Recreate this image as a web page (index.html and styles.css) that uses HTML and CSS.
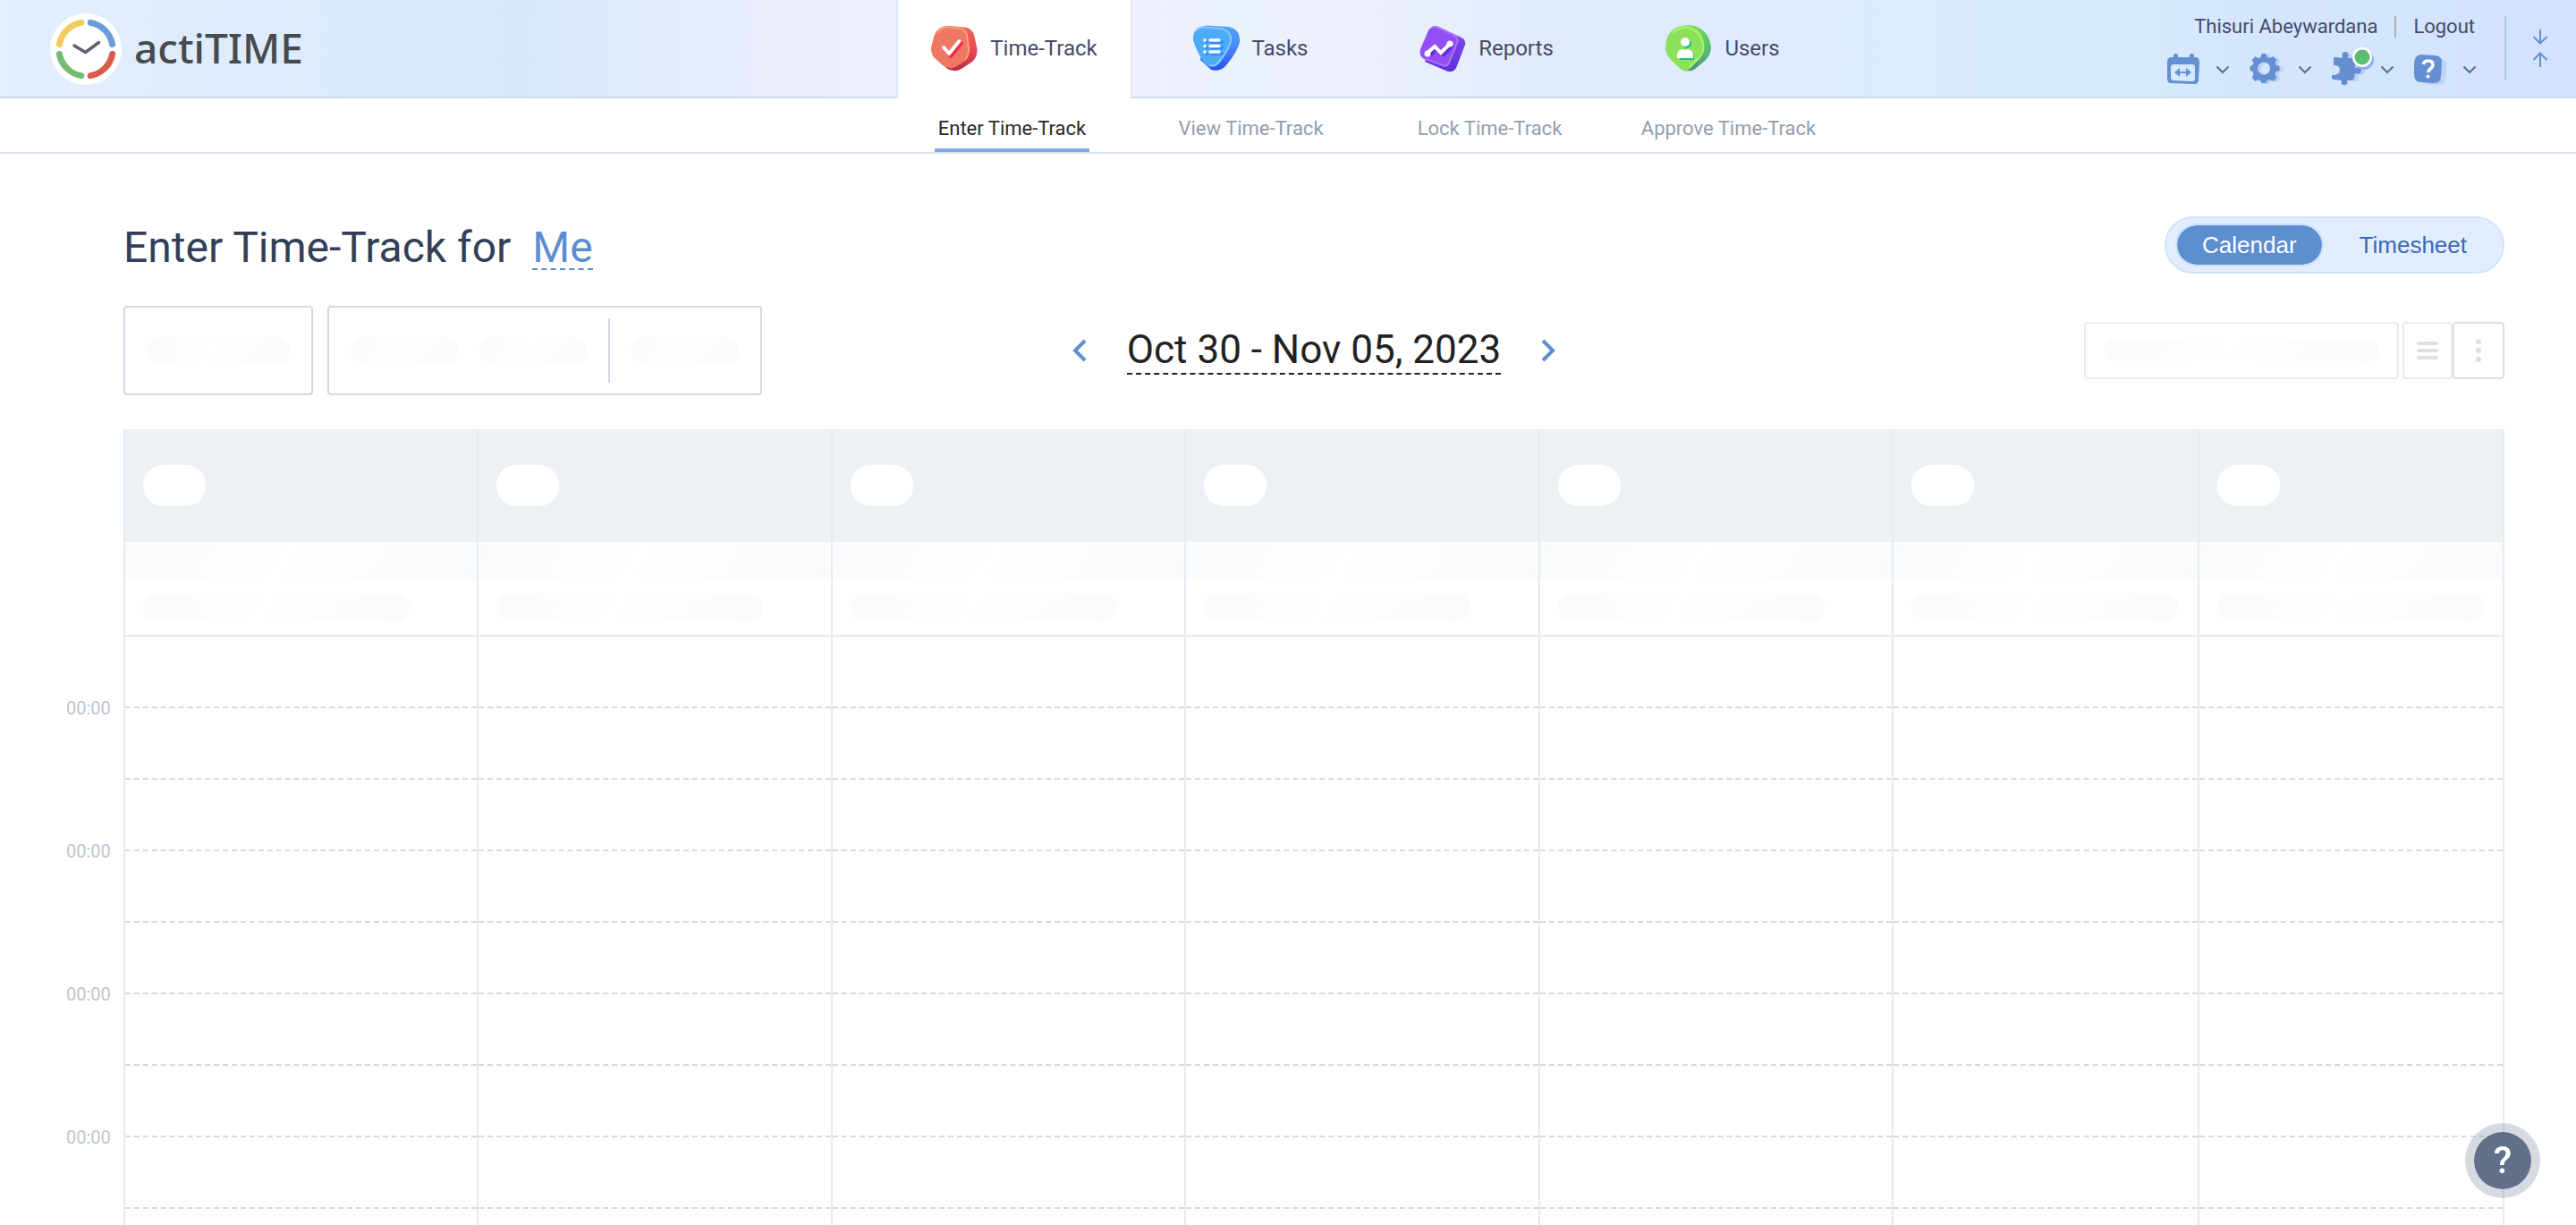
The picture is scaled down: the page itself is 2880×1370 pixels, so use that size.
FILE: index.html
```html
<!DOCTYPE html>
<html lang="en">
<head>
<meta charset="utf-8">
<title>actiTIME - Enter Time-Track</title>
<link rel="stylesheet" href="styles.css">
</head>
<body>
<div class="app">
  <header class="topbar">
    <a class="logo" href="#">
      <svg class="logo-mark" viewBox="0 0 80 80" aria-hidden="true">
        <circle cx="40" cy="40" r="40" fill="#fff"/>
        <g fill="none" stroke-width="7" stroke-linecap="round">
          <path d="M10.4 34.5A30 30 0 0 1 34.8 10.4" stroke="#f3cb5c"/>
          <path d="M45.2 10.4A30 30 0 0 1 69.6 34.5" stroke="#699dd8"/>
          <path d="M69.6 45.5A30 30 0 0 1 45.2 69.6" stroke="#d85c4c"/>
          <path d="M34.8 69.6A30 30 0 0 1 10.4 45.5" stroke="#76ba74"/>
        </g>
        <path d="M27 36l12.500 7.500L54.500 32.500" fill="none" stroke="#5f6073" stroke-width="3.500" stroke-linecap="round" stroke-linejoin="round"/>
      </svg>
      <span class="logo-text">actiTIME</span>
    </a>

    <nav class="tabs" aria-label="Main">
      <a class="tab tab-active" href="#">
        <svg class="tab-icon" viewBox="0 0 52 52" aria-hidden="true">
          <defs><linearGradient id="g-time" x1="0" y1="0" x2="0" y2="1"><stop offset="0" stop-color="#ee6a50"/><stop offset=".55" stop-color="#ee4459"/><stop offset="1" stop-color="#b92c44"/></linearGradient></defs>
          <path d="M18 1L38 2.500Q46 4 48 11L51.500 27Q52 36 46 41L34 49Q25 54 17 48L4 36Z" fill="url(#g-time)"/>
          <path d="M18 1L32 2.500Q39 4 41 11L43 26Q43 35 38 40L27 47Q20 50 13 45L4 37Q0 33 0 26L3 13Q7 1 18 1Z" fill="#ef7763"/>
          <path d="M7 9Q11 2 18 2.500L32 4Q38 5 40 11L42 26Q42 34 38 39" fill="none" stroke="#f5a07b" stroke-width="2"/>
          <path d="M16 28l6 7L34 20" fill="none" stroke="#f52755" stroke-width="4" stroke-linecap="round" stroke-linejoin="round"/>
          <path d="M14 25l6 7L31.500 18" fill="none" stroke="#fff" stroke-width="4" stroke-linecap="round" stroke-linejoin="round"/>
        </svg>
        <span>Time-Track</span>
      </a>
      <a class="tab" href="#">
        <svg class="tab-icon" viewBox="0 0 52 52" aria-hidden="true">
          <defs><linearGradient id="g-task" x1="0" y1="0" x2="0" y2="1"><stop offset="0" stop-color="#4ba8f8"/><stop offset=".5" stop-color="#4a86f6"/><stop offset="1" stop-color="#2452f2"/></linearGradient></defs>
          <path d="M14 0.500L40 2Q53 5 52 19Q50 29 37 45Q30 53 20 50L8 39Z" fill="url(#g-task)"/>
          <path d="M12 1L32 3Q44 5 43 18Q42 25 30 42Q20 51 12 42Q3 28 0 17Q-1 3 12 1Z" fill="#4dabf8"/>
          <path d="M3 7Q6 2 13 2.500L32 4Q43 7 42 18Q41 25 29 41Q24 47 18 45" fill="none" stroke="#83c6fb" stroke-width="2"/>
          <path d="M20 19h12M20 25.500h12M20 32h12M15 19h0M15 25.500h0M15 32h0" fill="none" stroke="#258afa" stroke-width="3.500" stroke-linecap="round"/>
          <path d="M19 17h10M19 23.500h10M19 30h10M13 17h0M13 23.500h0M13 30h0" fill="none" stroke="#fff" stroke-width="3.500" stroke-linecap="round"/>
        </svg>
        <span>Tasks</span>
      </a>
      <a class="tab" href="#">
        <svg class="tab-icon" viewBox="0 0 52 52" aria-hidden="true">
          <defs><linearGradient id="g-rep" x1="0" y1="0" x2="0" y2="1"><stop offset="0" stop-color="#8c4cf0"/><stop offset="1" stop-color="#5c2fdc"/></linearGradient></defs>
          <path d="M19 1.500L47 14Q52 17 51 22L41 48Q38 53 32 52L6 41Z" fill="url(#g-rep)"/>
          <path d="M21 2L38 10Q45 13 43 20L34 43Q31 48 26 46L5 38Q-1 34 1 27L10 6Q14 0 21 2Z" fill="#954df5"/>
          <path d="M14 3Q17 1 21 3L38 11Q44 14 42 20L33 42Q31 47 26 45L7 38" fill="none" stroke="#ab70f7" stroke-width="2"/>
          <path d="M12 34l7-8 8 7 10-10" fill="none" stroke="#5e2edd" stroke-width="4"/>
          <path d="M9 31l8-7 7 7 10-10" fill="none" stroke="#fff" stroke-width="4"/>
          <circle cx="9" cy="32" r="3.500" fill="#fff"/><circle cx="34" cy="21" r="3.500" fill="#fff"/>
        </svg>
        <span>Reports</span>
      </a>
      <a class="tab" href="#">
        <svg class="tab-icon" viewBox="0 0 52 52" aria-hidden="true">
          <defs><linearGradient id="g-user" x1="0" y1="0" x2="0" y2="1"><stop offset="0" stop-color="#77d254"/><stop offset=".6" stop-color="#52b878"/><stop offset="1" stop-color="#56907c"/></linearGradient></defs>
          <path d="M22 0.500H30Q49 5 51 25Q51 33 44 40L32 50Q29 52 22 51Z" fill="url(#g-user)"/>
          <path d="M22 0.500Q42 0 43.500 24Q43 34 36 40L26 50Q22 53 18 50L7 40Q0 33 0 25Q1 2 22 0.500Z" fill="#8de05a"/>
          <path d="M8 9Q21-3 34 7Q44 16 42 29Q40 35 35 39L27 47" fill="none" stroke="#a5f56c" stroke-width="2"/>
          <g fill="#22be84"><circle cx="24" cy="21" r="5"/><path d="M16 39v-4q1-6 6-6h4q6 1 6 6v4z"/></g>
          <g fill="#fff"><circle cx="22" cy="19" r="5"/><path d="M13 37v-4q1-6 6-6 3 2 6 0 5 1 6 6v4z"/></g>
        </svg>
        <span>Users</span>
      </a>
    </nav>

    <div class="account">
      <div class="account-main">
        <div class="account-links">
          <a href="#">Thisuri Abeywardana</a>
          <span class="account-sep"></span>
          <a href="#">Logout</a>
        </div>
        <div class="tools">
          <button class="tool" type="button" aria-label="Calendar settings">
            <svg class="tool-icon" viewBox="0 0 40 40" aria-hidden="true">
              <path d="M9 3q3-2 5 0v4H9zM27 3q3-2 5 0v4h-5z" fill="#6490d2"/>
              <path fill-rule="evenodd" d="M7 6h26q5 0 5 5l-1 20q0 5-5 5L6 35q-4 0-4-5L2 11q0-5 5-5zM9 14q-3 0-3 3v12q0 3 3 3l21 1q3 0 3-3V17q0-3-3-3z" fill="#6490d2"/>
              <path d="M10 23l6-5v4h7v-4l6 5-6 5v-4h-7v4z" fill="#6490d2"/>
            </svg>
            <svg class="tool-chevron" viewBox="0 0 16 10" aria-hidden="true"><path d="M1.500 1.500L8 8l6.500-6.500"/></svg>
          </button>
          <button class="tool" type="button" aria-label="Settings">
            <svg class="tool-icon" viewBox="0 0 40 40" aria-hidden="true">
              <defs><path id="gear" fill-rule="evenodd" d="M15.500 2h5l1 4 3 1 4-2 4 4-2 3 1 3 4 1v5l-4 1-1 3 2 4-4 4-4-2-3 1-1 3h-5l-1-3-3-1-3 2-4-4 2-4-1-3-3-1v-5l3-1 1-3-2-3 4-4 3 2 3-1zM18 11.500a7 7 0 1 0 0 14a7 7 0 1 0 0-14z"/></defs>
              <use href="#gear" x="4" y="1" fill="#bcd2f6"/>
              <use href="#gear" fill="#6490d2"/>
            </svg>
            <svg class="tool-chevron" viewBox="0 0 16 10" aria-hidden="true"><path d="M1.500 1.500L8 8l6.500-6.500"/></svg>
          </button>
          <button class="tool" type="button" aria-label="Add-ons">
            <svg class="tool-icon" viewBox="0 0 40 40" aria-hidden="true">
              <path d="M8 8q0-2 3-2l8-1q2-6 6 0l7 1v12q9-1 7 4t-7 4v6l-5 2z" fill="#bcd2f6"/>
              <path d="M4 8q0-3 3-2l7 1q-2-7 3-7t3 7h7q2 0 1 3v8q7-2 7 3t-7 3l-1 5q0 3-3 3h-5q2 5-3 5-5 0-3-5L5 31q-4 0-3-5 9 0 9-6 0-5-7-5z" fill="#6490d2"/>
              <circle cx="38" cy="9" r="11" fill="#8db2e8"/>
              <circle cx="36" cy="6" r="11" fill="#fff"/><circle cx="36" cy="6" r="8.500" fill="#5abf70"/>
            </svg>
            <svg class="tool-chevron" viewBox="0 0 16 10" aria-hidden="true"><path d="M1.500 1.500L8 8l6.500-6.500"/></svg>
          </button>
          <button class="tool" type="button" aria-label="Help">
            <svg class="tool-icon" viewBox="0 0 40 40" aria-hidden="true">
              <path d="M17 6l13 1q8 1 8 8l-1 15q-1 7-9 7l-12-1z" fill="#bcd2f6"/>
              <path d="M10 3l15 1q8 0 8 8l-1 15q0 8-8 8l-14-1q-8 0-8-9V12q1-9 8-9z" fill="#6490d2"/>
              <path d="M12.500 14q.500-4 5.500-4 5 0 5 4.500 0 2.500-3 4.500-2 1.500-2 4" fill="none" stroke="#fff" stroke-width="3.500"/>
              <circle cx="17.500" cy="27.500" r="2" fill="#fff"/>
            </svg>
            <svg class="tool-chevron" viewBox="0 0 16 10" aria-hidden="true"><path d="M1.500 1.500L8 8l6.500-6.500"/></svg>
          </button>
        </div>
      </div>
      <button class="collapse" type="button" aria-label="Collapse header">
        <svg viewBox="0 0 18 42" width="18" height="42" fill="none" stroke="#6490d2" stroke-width="2" aria-hidden="true"><path d="M9 0v15M1.500 8L9 15.500 16.500 8M9 42V27M1.500 34L9 26.500 16.500 34"/></svg>
      </button>
    </div>
  </header>

  <nav class="subnav" aria-label="Time-Track">
    <div class="subnav-item"><a class="subnav-link subnav-active" href="#">Enter Time-Track</a></div>
    <div class="subnav-item"><a class="subnav-link" href="#">View Time-Track</a></div>
    <div class="subnav-item"><a class="subnav-link" href="#">Lock Time-Track</a></div>
    <div class="subnav-item"><a class="subnav-link" href="#">Approve Time-Track</a></div>
  </nav>

  <main class="page">
    <div class="title-row">
      <h1 class="title">Enter Time-Track for <a class="title-user" href="#">Me</a></h1>
      <div class="switch">
        <button class="switch-option switch-on" type="button">Calendar</button>
        <button class="switch-option" type="button">Timesheet</button>
      </div>
    </div>

    <div class="controls">
      <div class="boxes">
        <div class="box"><span class="skeleton skeleton-wide"></span></div>
        <div class="box">
          <span class="skeleton"></span><span class="skeleton"></span>
          <span class="box-divider"></span>
          <span class="skeleton"></span>
        </div>
      </div>
      <div class="range">
        <button class="range-arrow" type="button" aria-label="Previous week"><svg width="16" height="26" viewBox="0 0 16 26" aria-hidden="true"><path d="M14 2L3 13l11 11"/></svg></button>
        <button class="range-label" type="button">Oct 30 - Nov 05, 2023</button>
        <button class="range-arrow" type="button" aria-label="Next week"><svg width="16" height="26" viewBox="0 0 16 26" aria-hidden="true"><path d="M2 2l11 11L2 24"/></svg></button>
      </div>
      <div class="view-tools">
        <div class="search-box"><span class="skeleton skeleton-search"></span></div>
        <button class="square" type="button" aria-label="List"><svg width="24" height="20" viewBox="0 0 24 20" aria-hidden="true"><path d="M2 2h20M2 10h20M2 18h20" stroke="#e0e0e0" stroke-width="4" stroke-linecap="round"/></svg></button>
        <button class="square square-more" type="button" aria-label="More"><svg width="6" height="26" viewBox="0 0 6 26" fill="#e0e0e0" aria-hidden="true"><circle cx="3" cy="3" r="3"/><circle cx="3" cy="13" r="3"/><circle cx="3" cy="23" r="3"/></svg></button>
      </div>
    </div>

    <div class="calendar">
      <div class="hours">
        <span class="hour">00:00</span><span class="hour">00:00</span><span class="hour">00:00</span><span class="hour">00:00</span>
      </div>
      <div class="days">
        <div class="day"><div class="day-head"><span class="day-pill"></span></div><div class="day-band"></div><div class="day-total"><span class="skeleton"></span></div><div class="slot"></div><div class="slot"></div><div class="slot"></div><div class="slot"></div><div class="slot"></div><div class="slot"></div><div class="slot"></div><div class="slot"></div><div class="slot"></div></div>
        <div class="day"><div class="day-head"><span class="day-pill"></span></div><div class="day-band"></div><div class="day-total"><span class="skeleton"></span></div><div class="slot"></div><div class="slot"></div><div class="slot"></div><div class="slot"></div><div class="slot"></div><div class="slot"></div><div class="slot"></div><div class="slot"></div><div class="slot"></div></div>
        <div class="day"><div class="day-head"><span class="day-pill"></span></div><div class="day-band"></div><div class="day-total"><span class="skeleton"></span></div><div class="slot"></div><div class="slot"></div><div class="slot"></div><div class="slot"></div><div class="slot"></div><div class="slot"></div><div class="slot"></div><div class="slot"></div><div class="slot"></div></div>
        <div class="day"><div class="day-head"><span class="day-pill"></span></div><div class="day-band"></div><div class="day-total"><span class="skeleton"></span></div><div class="slot"></div><div class="slot"></div><div class="slot"></div><div class="slot"></div><div class="slot"></div><div class="slot"></div><div class="slot"></div><div class="slot"></div><div class="slot"></div></div>
        <div class="day"><div class="day-head"><span class="day-pill"></span></div><div class="day-band"></div><div class="day-total"><span class="skeleton"></span></div><div class="slot"></div><div class="slot"></div><div class="slot"></div><div class="slot"></div><div class="slot"></div><div class="slot"></div><div class="slot"></div><div class="slot"></div><div class="slot"></div></div>
        <div class="day"><div class="day-head"><span class="day-pill"></span></div><div class="day-band"></div><div class="day-total"><span class="skeleton"></span></div><div class="slot"></div><div class="slot"></div><div class="slot"></div><div class="slot"></div><div class="slot"></div><div class="slot"></div><div class="slot"></div><div class="slot"></div><div class="slot"></div></div>
        <div class="day"><div class="day-head"><span class="day-pill"></span></div><div class="day-band"></div><div class="day-total"><span class="skeleton"></span></div><div class="slot"></div><div class="slot"></div><div class="slot"></div><div class="slot"></div><div class="slot"></div><div class="slot"></div><div class="slot"></div><div class="slot"></div><div class="slot"></div></div>
      </div>
    </div>
  </main>

  <button class="help-button" type="button" aria-label="Open help">?</button>
</div>
</body>
</html>
```
FILE: styles.css
```css
* { box-sizing: border-box; }

body {
  margin: 0;
  background: #fff;
  color: #333f57;
  font-family: Roboto, "Liberation Sans", sans-serif;
}

a { color: inherit; text-decoration: none; }

button {
  margin: 0;
  padding: 0;
  border: 0;
  background: none;
  color: inherit;
  font: inherit;
  cursor: pointer;
}

svg { display: block; }

.app {
  display: flex;
  flex-direction: column;
  height: 100vh;
  overflow: hidden;
}

/* Header */
.topbar {
  display: grid;
  grid-template-columns: 1002fr 1056px 822fr;
  flex: none;
  height: 110px;
  background: linear-gradient(90deg, #e3effe 0%, #dfebfc 10%, #dbebfb 14%, #d7e9fb 20%, #e5ebfb 27%, #eeeffd 34%, #ecf2fd 48%, #ebeffc 54%, #e1ebfc 60%, #deebfc 70%, #d9ecfb 77%, #d9ecfb 82%, #d5e7fe 86%, #d2e2fd 100%);
  box-shadow: inset 0 -2px #cddbec;
}

.logo {
  display: flex;
  align-items: center;
  gap: 14px;
  padding-left: 56px;
}

.logo-mark { width: 80px; height: 80px; }

.logo-text {
  padding-bottom: 4px;
  color: #464b4f;
  font-family: "Noto Sans", sans-serif;
  font-size: 46px;
  font-weight: 500;
  line-height: 60px;
}

.tabs {
  display: grid;
  grid-template-columns: repeat(4, 1fr);
}

.tab {
  display: flex;
  align-items: center;
  justify-content: center;
  gap: 14px;
  padding-bottom: 2px;
  color: #454b66;
  font-size: 24px;
  line-height: 32px;
}

.tab-active {
  background: #fff;
  border: solid #dfe9fc;
  border-width: 0 2px;
}

.tab-icon { width: 52px; height: 52px; }

.account {
  display: flex;
  justify-content: flex-end;
}

.account-main {
  display: flex;
  flex-direction: column;
  align-items: flex-end;
  gap: 14px;
  padding: 16px 31px 0 0;
}

.account-links {
  display: flex;
  align-items: center;
  gap: 19px;
  padding-right: 2px;
  color: #454b66;
  font-size: 22px;
  line-height: 28px;
}

.account-sep { width: 2px; height: 24px; background: #adadad; }

.tools { display: flex; gap: 20px; }

.tool {
  display: flex;
  align-items: center;
  gap: 16px;
}

.tool-icon { width: 40px; height: 40px; overflow: visible; }

.tool-chevron {
  width: 16px;
  height: 10px;
  fill: none;
  stroke: #5d6f8a;
  stroke-width: 2;
}

.collapse {
  align-self: flex-start;
  display: flex;
  align-items: center;
  justify-content: flex-end;
  width: 80px;
  height: 72px;
  margin-top: 18px;
  padding-right: 31px;
  border-left: 2px solid #b2c8e8;
}

/* Section navigation */
.subnav {
  display: grid;
  grid-template-columns: 998fr repeat(4, 267px) 814fr;
  flex: none;
  height: 62px;
  border-bottom: 2px solid #dce4ee;
}

.subnav-item {
  display: flex;
  justify-content: center;
}

.subnav-item:first-child { grid-column: 2; }

.subnav-link {
  padding: 20px 4px 0;
  border-bottom: 4px solid transparent;
  color: #929ead;
  font-size: 22px;
  line-height: 28px;
}

.subnav-active { border-color: #7fa8e9; color: #2a2a2a; }

/* Page heading */
.page {
  display: flex;
  flex-direction: column;
  flex: 1;
  min-height: 0;
  padding: 70px 80px 0 74px;
}

.title-row {
  display: flex;
  flex: none;
  align-items: flex-start;
  justify-content: space-between;
  height: 100px;
  padding-left: 64px;
}

.title {
  margin: 0;
  padding-top: 12px;
  font-size: 48px;
  font-weight: 400;
  line-height: 46px;
}

.title-user {
  display: inline-block;
  margin-left: 12px;
  border-bottom: 2px dashed #5c8ed0;
  color: #5c8ed0;
}

.switch {
  display: flex;
  height: 64px;
  padding: 6px 10px;
  border: 2px solid #cde6fb;
  border-radius: 32px;
  background: #e2eefd;
}

.switch-option {
  padding: 0 28px;
  color: #3c68b8;
  font-family: "Liberation Sans", sans-serif;
  font-size: 26px;
  line-height: 44px;
  border: 2px solid transparent;
  border-radius: 24px;
}

.switch-option:last-child { padding-left: 38px; }

.switch-on {
  border-color: #cde2fa;
  background: #5c8ed0;
  background-clip: padding-box;
  color: #fff;
}

/* Toolbar */
.controls {
  display: grid;
  flex: none;
  grid-template-columns: 1fr auto 1fr;
  align-items: center;
  height: 100px;
  margin-bottom: 38px;
  padding-left: 64px;
}

.boxes { display: flex; gap: 16px; }

.box {
  display: flex;
  align-items: center;
  gap: 24px;
  height: 100px;
  padding: 0 24px;
  border: 2px solid #d1d8e3;
  border-radius: 4px;
}

.box-divider { width: 2px; height: 72px; background: #d1d8e3; }

.skeleton {
  width: 120px;
  height: 30px;
  border-radius: 15px;
  background: linear-gradient(120deg, #f9fafc, #fff 45%, #fefefe 55%, #f9fafc);
}

.skeleton-wide { width: 160px; }
.skeleton-search { width: 308px; height: 24px; }

.range { display: flex; align-items: center; gap: 45px; }

.range-arrow svg { fill: none; stroke: #5c8ed0; stroke-width: 4; }

.range-label {
  border-bottom: 2px dashed #222;
  color: #222;
  font-size: 44px;
  line-height: 52px;
}

.view-tools { display: flex; justify-content: flex-end; }

.search-box,
.square {
  display: flex;
  align-items: center;
  justify-content: center;
  height: 64px;
  border: 2px solid #e7ebf2;
  border-radius: 4px;
}

.search-box { width: 352px; margin-right: 4px; }
.square { width: 56px; }
.square-more { width: 58px; border-color: #e0e0e0; }

/* Calendar */
.calendar { display: flex; }

.hours {
  flex: none;
  width: 64px;
  padding-top: 232px;
}

.hour {
  display: block;
  height: 160px;
  padding-top: 68px;
  color: #bcc6d2;
  font-size: 20px;
  line-height: 24px;
}

.days {
  display: grid;
  flex: 1;
  grid-template-columns: repeat(5, 22fr) repeat(2, 19fr);
  border-right: 2px solid #e6eaf2;
}

.day { border-left: 2px solid #e6eaf2; }

.day-head {
  height: 126px;
  padding: 40px 20px;
  background: #edf0f5;
}

.day-pill {
  display: block;
  width: 70px;
  height: 46px;
  border-radius: 22px;
  background: #fff;
}

.day-band {
  height: 40px;
  margin-top: 2px;
  background: linear-gradient(120deg, #f9fafc, #fff 45%, #fefefe 55%, #f9fafc);
}

.day-total {
  height: 64px;
  padding: 16px 20px;
  border-bottom: 2px solid #e6eaf2;
}

.day-total .skeleton { display: block; width: 298px; }

.slot { height: 80px; border-bottom: 2px dashed #dadada; }

/* Floating help */
.help-button {
  position: fixed;
  right: 40px;
  bottom: 30px;
  width: 84px;
  height: 84px;
  border: 10px solid rgba(96, 112, 137, 0.25);
  border-radius: 50%;
  background: #607089;
  background-clip: padding-box;
  color: #fff;
  font-size: 42px;
  font-weight: 500;
  line-height: 64px;
}
```
